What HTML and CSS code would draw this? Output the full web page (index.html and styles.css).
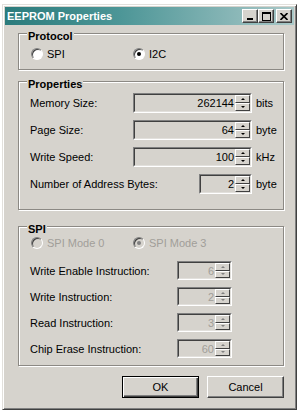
FILE: index.html
```html
<!DOCTYPE html>
<html lang="en">
<head>
    <meta charset="UTF-8">
    <title>EEPROM Properties</title>
    <link rel="stylesheet" href="styles.css">
</head>
<body>
    <div class="window">
        <div class="titlebar">
            <span class="title">EEPROM Properties</span>
            <div class="caption">
                <span class="cbtn"><svg width="8" height="8" viewBox="0 0 8 8"><rect x="1" y="6" width="6" height="2"/></svg></span>
                <span class="cbtn"><svg width="9" height="9" viewBox="0 0 9 9"><rect x="0.5" y="0.5" width="8" height="8" fill="none" stroke="#000"/><rect x="0" y="0" width="9" height="2"/></svg></span>
                <span class="cbtn close"><svg width="8" height="7" viewBox="0 0 8 7"><path d="M0.5 0 L7.5 7 M7.5 0 L0.5 7" stroke="#000" stroke-width="1.6"/></svg></span>
            </div>
        </div>

        <div class="content">
            <fieldset class="group protocol">
                <legend>Protocol</legend>
                <div class="radios">
                    <label class="radio first"><span class="dot"></span>SPI</label>
                    <label class="radio checked"><span class="dot"></span>I2C</label>
                </div>
            </fieldset>

            <fieldset class="group props">
                <legend>Properties</legend>
                <div class="row">
                    <span class="label">Memory Size:</span>
                    <div class="spin wide"><div class="spin-in"><span class="value">262144</span><span class="arrows"><i class="up"></i><i class="down"></i></span></div></div>
                    <span class="unit">bits</span>
                </div>
                <div class="row">
                    <span class="label">Page Size:</span>
                    <div class="spin wide"><div class="spin-in"><span class="value">64</span><span class="arrows"><i class="up"></i><i class="down"></i></span></div></div>
                    <span class="unit">byte</span>
                </div>
                <div class="row">
                    <span class="label">Write Speed:</span>
                    <div class="spin wide"><div class="spin-in"><span class="value">100</span><span class="arrows"><i class="up"></i><i class="down"></i></span></div></div>
                    <span class="unit">kHz</span>
                </div>
                <div class="row">
                    <span class="label">Number of Address Bytes:</span>
                    <div class="spin narrow"><div class="spin-in"><span class="value">2</span><span class="arrows"><i class="up"></i><i class="down"></i></span></div></div>
                    <span class="unit">byte</span>
                </div>
            </fieldset>

            <fieldset class="group spi">
                <legend>SPI</legend>
                <div class="radios">
                    <label class="radio first disabled"><span class="dot"></span>SPI Mode 0</label>
                    <label class="radio checked disabled"><span class="dot"></span>SPI Mode 3</label>
                </div>
                <div class="spi-rows">
                    <div class="row small">
                        <span class="label">Write Enable Instruction:</span>
                        <div class="spin tiny disabled"><div class="spin-in"><span class="value">6</span><span class="arrows"><i class="up"></i><i class="down"></i></span></div></div>
                    </div>
                    <div class="row small">
                        <span class="label">Write Instruction:</span>
                        <div class="spin tiny disabled"><div class="spin-in"><span class="value">2</span><span class="arrows"><i class="up"></i><i class="down"></i></span></div></div>
                    </div>
                    <div class="row small">
                        <span class="label">Read Instruction:</span>
                        <div class="spin tiny disabled"><div class="spin-in"><span class="value">3</span><span class="arrows"><i class="up"></i><i class="down"></i></span></div></div>
                    </div>
                    <div class="row small">
                        <span class="label">Chip Erase Instruction:</span>
                        <div class="spin tiny disabled"><div class="spin-in"><span class="value">60</span><span class="arrows"><i class="up"></i><i class="down"></i></span></div></div>
                    </div>
                </div>
            </fieldset>

            <div class="buttons">
                <button class="btn default">OK</button>
                <button class="btn">Cancel</button>
            </div>
        </div>
    </div>
</body>
</html>
```

FILE: styles.css
```css
:root {
    --face: #d6d3cd;
    --shadow: #808080;
    --dark: #404040;
    --light: #ffffff;
    --gray-text: #a19e99;
}
body {
    margin: 0;
    padding: 4px 3px 0 2px;
    background: #fff;
    font-family: "Liberation Sans", Arial, sans-serif;
    font-size: 11px;
    color: #000;
}
.window {
    width: 295px;
    height: 406px;
    box-sizing: border-box;
    background: var(--face);
    border: 1px solid;
    border-color: #e2e0dc var(--dark) var(--dark) #e2e0dc;
    box-shadow: inset 1px 1px 0 var(--light), inset -1px -1px 0 var(--shadow);
    padding: 2px;
    display: flex;
    flex-direction: column;
}
.titlebar {
    height: 18px;
    display: flex;
    align-items: center;
    justify-content: space-between;
    padding: 0 2px;
    background: linear-gradient(to right, #2b7b7c, #4d9697 40%, #a9c8c8);
    color: #fff;
    font-weight: bold;
}
.caption {
    display: flex;
}
.cbtn {
    width: 16px;
    height: 14px;
    box-sizing: border-box;
    background: var(--face);
    border: 1px solid;
    border-color: var(--light) var(--dark) var(--dark) var(--light);
    box-shadow: inset -1px -1px 0 var(--shadow);
    display: flex;
    align-items: center;
    justify-content: center;
}
.cbtn.close {
    margin-left: 2px;
}
.content {
    flex: 1;
    display: flex;
    flex-direction: column;
    padding: 0 10px 0 13px;
}
.group {
    margin: 0;
    padding: 0 0 0 11px;
    min-width: 0;
    border: 1px solid #8c8984;
    box-shadow: inset 1px 1px 0 var(--light), 1px 1px 0 var(--light);
}
.group legend {
    font-weight: bold;
    line-height: 12px;
    padding: 5px 1px 0;
    margin-left: -3px;
    background: var(--face);
}
.protocol {
    padding-top: 5px;
    padding-bottom: 8px;
}
.props {
    margin-top: 3px;
    padding-top: 3px;
    padding-bottom: 15px;
    display: flex;
    flex-direction: column;
    gap: 7px;
}
.spi {
    margin-top: 8px;
    padding-top: 1px;
    padding-bottom: 7px;
}
.radios {
    display: flex;
    height: 14px;
    padding-left: 1px;
}
.radio {
    display: flex;
    align-items: center;
    gap: 4px;
}
.radio.first {
    width: 102px;
}
.radio.disabled {
    color: var(--gray-text);
}
.dot {
    width: 12px;
    height: 12px;
    box-sizing: border-box;
    border-radius: 50%;
    background: #fff;
    border: 1px solid;
    border-color: var(--shadow) var(--light) var(--light) var(--shadow);
    box-shadow: inset 1px 1px 0 var(--dark);
    display: flex;
    align-items: center;
    justify-content: center;
}
.radio.checked .dot::after {
    content: "";
    width: 4px;
    height: 4px;
    border-radius: 50%;
    background: #000;
}
.radio.disabled .dot {
    background: var(--face);
}
.radio.disabled.checked .dot::after {
    background: var(--shadow);
}
.row {
    display: flex;
    align-items: center;
    height: 20px;
}
.row .label {
    flex: 1;
}
.row .unit {
    width: 27px;
    margin-left: 4px;
}
.spi-rows {
    margin-top: 11px;
    display: flex;
    flex-direction: column;
    gap: 7px;
}
.row.small {
    height: 19px;
}
.row.small .label {
    flex: none;
    width: 147px;
}
.spin {
    height: 100%;
    box-sizing: border-box;
    border: 1px solid;
    border-color: var(--shadow) var(--light) var(--light) var(--shadow);
}
.spin.wide {
    width: 119px;
}
.spin.narrow {
    width: 53px;
}
.spin.tiny {
    width: 55px;
}
.spin-in {
    height: 100%;
    box-sizing: border-box;
    display: flex;
    border: 1px solid;
    border-color: var(--dark) #e2e0dc #e2e0dc var(--dark);
    background: var(--face);
}
.value {
    flex: 1;
    text-align: right;
    padding-right: 1px;
    line-height: 16px;
}
.spin.disabled .value {
    color: var(--gray-text);
}
.arrows {
    width: 15px;
    display: flex;
    flex-direction: column;
}
.arrows i {
    flex: 1;
    box-sizing: border-box;
    border: 1px solid;
    border-color: var(--light) var(--dark) var(--dark) var(--light);
    display: flex;
    align-items: center;
    justify-content: center;
}
.arrows i::after {
    content: "";
    border-left: 2px solid transparent;
    border-right: 2px solid transparent;
}
.arrows .up::after {
    border-bottom: 2px solid #000;
}
.arrows .down::after {
    border-top: 2px solid #000;
}
.spin.disabled .arrows .up::after {
    border-bottom-color: var(--shadow);
}
.spin.disabled .arrows .down::after {
    border-top-color: var(--shadow);
}
.buttons {
    margin-top: 10px;
    display: flex;
    justify-content: flex-end;
    gap: 8px;
}
.btn {
    width: 77px;
    height: 22px;
    padding: 0;
    font-family: inherit;
    font-size: 11px;
    color: #000;
    background: var(--face);
    border: 1px solid;
    border-color: var(--light) var(--dark) var(--dark) var(--light);
    box-shadow: inset -1px -1px 0 var(--shadow);
}
.btn.default {
    border: 1px solid #000;
    box-shadow: inset 1px 1px 0 var(--light), inset -1px -1px 0 var(--dark), inset -2px -2px 0 var(--shadow);
}
```
